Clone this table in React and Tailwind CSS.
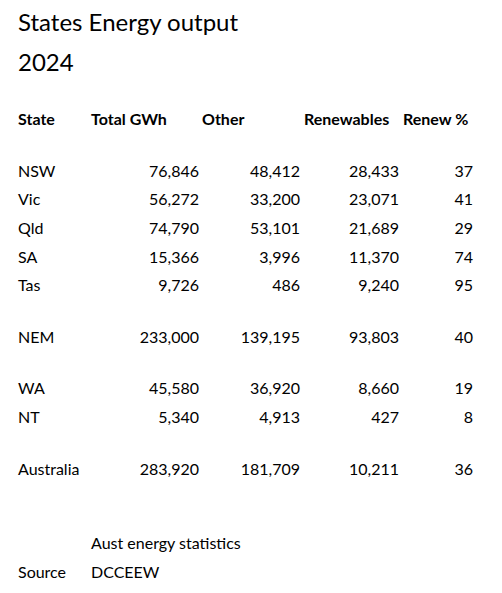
import React from 'react'

const rows = [
  ['NSW', '76,846', '48,412', '28,433', '37'],
  ['Vic', '56,272', '33,200', '23,071', '41'],
  ['Qld', '74,790', '53,101', '21,689', '29'],
  ['SA', '15,366', '3,996', '11,370', '74'],
  ['Tas', '9,726', '486', '9,240', '95'],
  null,
  ['NEM', '233,000', '139,195', '93,803', '40'],
  null,
  ['WA', '45,580', '36,920', '8,660', '19'],
  ['NT', '5,340', '4,913', '427', '8'],
  null,
  ['Australia', '283,920', '181,709', '10,211', '36'],
]

const cols = 'grid grid-cols-[73px_113px_101px_99px_74px]'

function DataRow({ cells }) {
  return (
    <div className={`${cols} h-[28.6px] items-center`}>
      <span className="pl-[3px]">{cells[0]}</span>
      {cells.slice(1).map((c, i) => (
        <span key={i} className="text-right pr-[2px]">{c}</span>
      ))}
    </div>
  )
}

export default function App() {
  return (
    <div className="w-[502px] h-[593px] bg-white text-black pl-[15px] pt-[2px] font-['Lato',sans-serif] text-[16px] leading-none">
      <div className="h-[40px] flex items-center pl-[3px] text-[24px]">States Energy output</div>
      <div className="h-[40px] flex items-center pl-[3px] text-[24px]">2024</div>
      <div className="h-[23px]" />
      <div className={`${cols} h-[28.6px] items-center font-bold whitespace-nowrap`}>
        <span className="pl-[3px]">State</span>
        <span className="pl-[3px]">Total GWh</span>
        <span className="pl-[1px]">Other</span>
        <span className="pl-[2px]">Renewables</span>
        <span className="pl-[2px]">Renew %</span>
      </div>
      <div className="h-[23px]" />
      {rows.map((r, i) => r ? <DataRow key={i} cells={r} /> : <div key={i} className="h-[23px]" />)}
      <div className="h-[23px]" />
      <div className="h-[23px]" />
      <div className={`${cols} h-[28.6px] items-center`}>
        <span />
        <span className="pl-[3px] col-span-2">Aust energy statistics</span>
      </div>
      <div className={`${cols} h-[28.6px] items-center`}>
        <span className="pl-[3px]">Source</span>
        <span className="pl-[3px]">DCCEEW</span>
      </div>
    </div>
  )
}
